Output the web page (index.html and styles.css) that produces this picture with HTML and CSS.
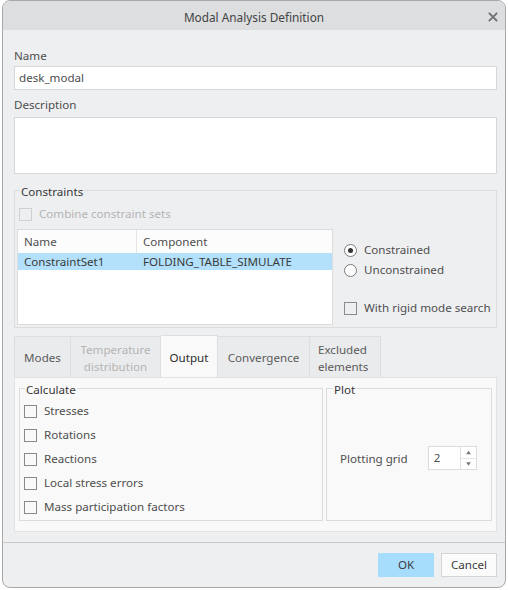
FILE: index.html
```html
<!DOCTYPE html>
<html>
<head>
<meta charset="utf-8">
<link rel="stylesheet" href="styles.css">
</head>
<body>
<div class="dialog">
  <div class="titlebar">
    <span class="title">Modal Analysis Definition</span>
    <svg class="close" width="10" height="10" viewBox="0 0 10 10"><path d="M1.5 1.5L8.5 8.5M8.5 1.5L1.5 8.5" stroke="#727272" stroke-width="1.8" stroke-linecap="square"/></svg>
  </div>
  <div class="content">
    <div class="label">Name</div>
    <div class="input">desk_modal</div>
    <div class="label desc">Description</div>
    <div class="textarea"></div>

    <fieldset class="group constraints">
      <legend>Constraints</legend>
      <div class="check disabled"><span class="box"></span><span>Combine constraint sets</span></div>
      <div class="crow">
        <div class="table">
          <div class="thead">
            <div class="c1">Name</div>
            <div class="c2">Component</div>
          </div>
          <div class="trow sel">
            <div class="c1">ConstraintSet1</div>
            <div class="c2">FOLDING_TABLE_SIMULATE</div>
          </div>
        </div>
        <div class="options">
          <div class="radio"><span class="dot on"></span><span>Constrained</span></div>
          <div class="radio"><span class="dot"></span><span>Unconstrained</span></div>
          <div class="check rigid"><span class="box"></span><span>With rigid mode search</span></div>
        </div>
      </div>
    </fieldset>

    <div class="tabs">
      <div class="tabstrip">
        <div class="tab t-modes">Modes</div>
        <div class="tab t-temp disabled">Temperature<br>distribution</div>
        <div class="tab t-out active">Output</div>
        <div class="tab t-conv">Convergence</div>
        <div class="tab t-excl">Excluded<br>elements</div>
      </div>
      <div class="panel">
        <fieldset class="group calc">
          <legend>Calculate</legend>
          <div class="check item"><span class="box"></span><span>Stresses</span></div>
          <div class="check item"><span class="box"></span><span>Rotations</span></div>
          <div class="check item"><span class="box"></span><span>Reactions</span></div>
          <div class="check item"><span class="box"></span><span>Local stress errors</span></div>
          <div class="check item"><span class="box"></span><span>Mass participation factors</span></div>
        </fieldset>
        <fieldset class="group plot">
          <legend>Plot</legend>
          <div class="plotrow">
            <span>Plotting grid</span>
            <div class="spin">
              <span class="val">2</span>
              <div class="arrows">
                <svg width="15" height="11" viewBox="0 0 15 11"><path d="M5 7.5L7.5 4L10 7.5Z" fill="#777"/></svg>
                <svg width="15" height="11" viewBox="0 0 15 11"><path d="M5 3.5L7.5 7L10 3.5Z" fill="#777"/></svg>
              </div>
            </div>
          </div>
        </fieldset>
      </div>
    </div>
  </div>
  <div class="footer">
    <div class="btn ok">OK</div>
    <div class="btn">Cancel</div>
  </div>
</div>
</body>
</html>
```

FILE: styles.css
```css
html, body {
  margin: 0;
  padding: 0;
  background: #ffffff;
}
body {
  font-family: "Noto Sans", "Open Sans", sans-serif;
  font-size: 11.6px;
  color: #4e4e4e;
}
.dialog {
  margin-left: 2px;
  width: 502px;
  height: 586px;
  border: 1px solid #a8a8a8;
  border-radius: 8px;
  background: #eeeff1;
  overflow: hidden;
  display: flex;
  flex-direction: column;
}
.titlebar {
  height: 29px;
  background: #dcdedf;
  display: flex;
  align-items: center;
  justify-content: center;
  position: relative;
}
.title {
  font-size: 11.8px;
  color: #444;
  margin-top: 3px;
}
.close {
  position: absolute;
  right: 7px;
  top: 11px;
}
.content {
  padding: 0 8px 0 11px;
  display: flex;
  flex-direction: column;
}
.label {
  height: 16px;
  line-height: 16px;
  margin-top: 18px;
}
.label.desc {
  margin-top: 7px;
}
.input {
  margin-top: 2px;
  height: 22px;
  line-height: 22px;
  background: #fff;
  border: 1px solid #d6d6d6;
  padding: 0 4px;
}
.textarea {
  margin-top: 4px;
  height: 55px;
  background: #fff;
  border: 1px solid #d6d6d6;
}
fieldset.group {
  margin: 0;
  border: 1px solid #dcdcdc;
  min-width: 0;
  box-sizing: border-box;
}
fieldset.group legend {
  padding: 4px 1px 0 1px;
  line-height: 16px;
  height: 20px;
  box-sizing: border-box;
  color: #383838;
}
fieldset.constraints {
  margin-top: 6px;
  padding: 5px 2px 2px 2px;
  height: 148px;
}
fieldset.constraints legend {
  margin-left: 3px;
}
.check, .radio {
  display: flex;
  align-items: center;
  height: 18px;
  line-height: 18px;
  white-space: nowrap;
}
.box {
  width: 11px;
  height: 11px;
  border: 1px solid #8a8a8a;
  background: transparent;
  margin-right: 7px;
  flex: none;
}
.check.disabled {
  color: #b4b4b4;
  padding-left: 2px;
}
.check.disabled .box {
  border-color: #d0d0d0;
}
.crow {
  display: flex;
  margin-top: 6px;
}
.table {
  width: 314px;
  height: 94px;
  background: #fff;
  border: 1px solid #dcdcdc;
  flex: none;
}
.thead, .trow {
  display: flex;
}
.thead {
  height: 23px;
  line-height: 24px;
  background: #fcfcfc;
}
.thead .c1 {
  border-right: 1px solid #e4e4e4;
}
.trow {
  height: 17px;
  line-height: 17px;
}
.trow.sel {
  background: #b3e1fb;
  color: #3a3a3a;
}
.c1 {
  width: 112px;
  padding-left: 6px;
}
.c2 {
  padding-left: 6px;
}
.trow .c1 {
  width: 113px;
}
.options {
  margin-left: 11px;
  display: flex;
  flex-direction: column;
  padding-top: 11px;
}
.radio {
  height: 20px;
}
.dot {
  width: 11px;
  height: 11px;
  border: 1px solid #7a7a7a;
  border-radius: 50%;
  margin-right: 7px;
  position: relative;
  flex: none;
  background: #fff;
}
.dot.on::after {
  content: "";
  position: absolute;
  left: 3px;
  top: 3px;
  width: 5px;
  height: 5px;
  border-radius: 50%;
  background: #333;
}
.check.rigid {
  margin-top: 19px;
}
.tabs {
  margin-top: 8px;
  display: flex;
  flex-direction: column;
}
.tabstrip {
  display: flex;
  align-items: flex-end;
  height: 41px;
}
.tab {
  height: 41px;
  box-sizing: border-box;
  border: 1px solid #dedede;
  border-bottom: none;
  border-left: none;
  background: #eaebed;
  color: #5a5a5a;
  display: flex;
  align-items: center;
  justify-content: center;
  text-align: center;
  line-height: 17px;
  padding-top: 1px;
}
.t-modes { width: 57px; border-left: 1px solid #dedede; }
.t-temp { width: 90px; color: #b4b4b4; }
.t-out {
  width: 57px;
  height: 42px;
  background: #f9f9f9;
  color: #2c2c2c;
}
.t-conv { width: 92px; }
.t-excl { width: 71px; justify-content: flex-start; padding-left: 8px; text-align: left; }
.panel {
  height: 155px;
  box-sizing: border-box;
  background: #f9f9f9;
  border: 1px solid #e2e2e2;
  display: flex;
  padding: 0 4px 0 4px;
  gap: 3px;
}
fieldset.calc {
  width: 304px;
  height: 143px;
  padding: 1px 0 0 4px;
  flex: none;
}
fieldset.calc legend {
  margin-left: 1px;
}
.check.item {
  height: 24px;
}
fieldset.plot {
  width: 166px;
  height: 143px;
  padding: 0;
  flex: none;
}
fieldset.plot legend {
  margin-left: 6px;
}
.plotrow {
  display: flex;
  align-items: center;
  margin-top: 48px;
  padding-left: 13px;
}
.spin {
  margin-left: 20px;
  width: 49px;
  height: 24px;
  box-sizing: border-box;
  border: 1px solid #dcdcdc;
  background: #fff;
  display: flex;
}
.spin .val {
  flex: 1;
  padding-left: 5px;
  line-height: 22px;
}
.arrows {
  width: 15px;
  border-left: 1px solid #e0e0e0;
  display: flex;
  flex-direction: column;
}
.arrows svg {
  display: block;
}
.arrows svg:first-child {
  border-bottom: 1px solid #e6e6e6;
}
.footer {
  margin-top: 10px;
  border-top: 1px solid #c9c9c9;
  display: flex;
  justify-content: flex-end;
  gap: 7px;
  padding: 10px 8px 0 0;
}
.btn {
  width: 54px;
  height: 22px;
  line-height: 22px;
  text-align: center;
  background: #fbfbfb;
  border: 1px solid #d4d4d4;
  color: #3c3c3c;
}
.btn.ok {
  background: #a6dcfc;
  border-color: #a6dcfc;
}
```
